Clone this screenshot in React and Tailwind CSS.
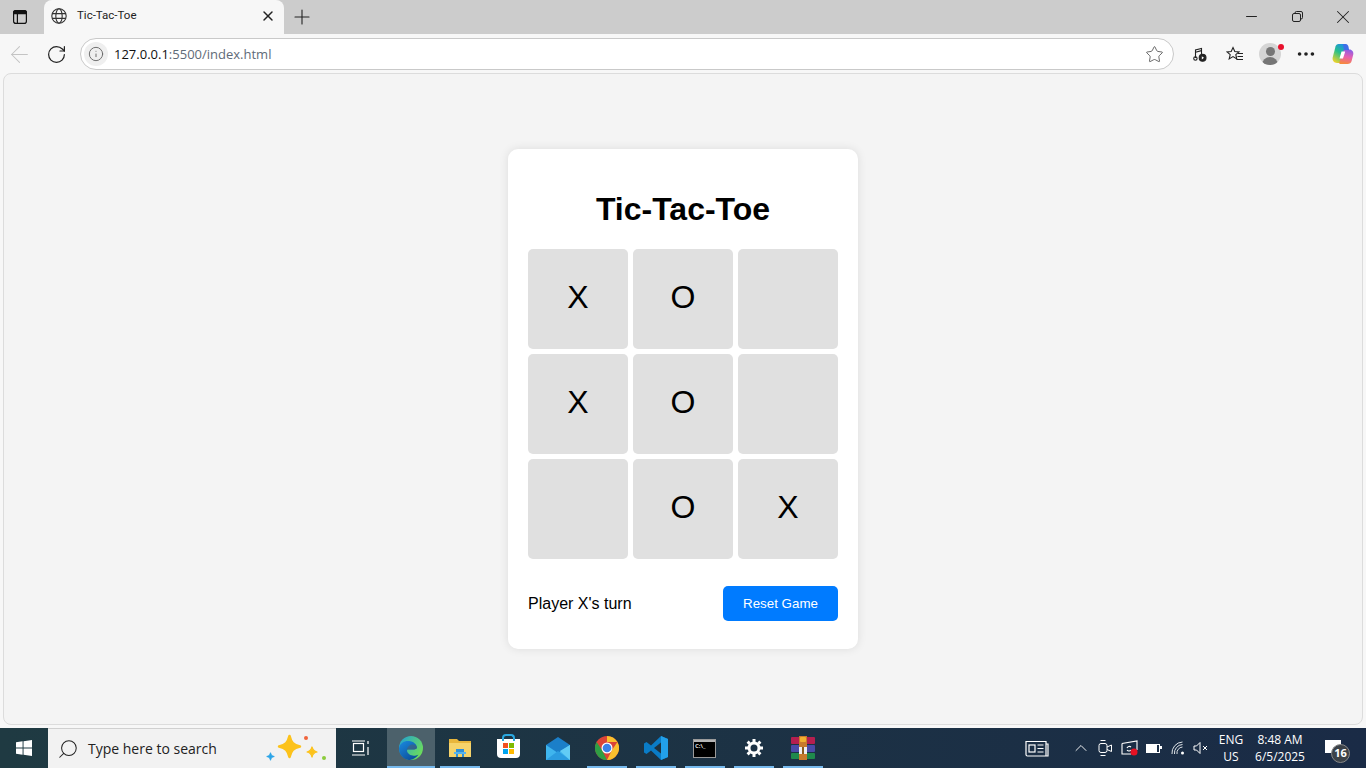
import { ArrowLeft, RotateCw, Star, Info, Plus, X, Minus, Search, MoreHorizontal, ChevronUp } from 'lucide-react'

const board = ['X', 'O', '', 'X', 'O', '', '', 'O', 'X']

function GlobeIcon() {
  return (
    <svg width="16" height="16" viewBox="0 0 16 16" fill="none" stroke="#333" strokeWidth="1.1">
      <circle cx="8" cy="8" r="7.2" />
      <ellipse cx="8" cy="8" rx="3.2" ry="7.2" />
      <path d="M1.2 5.6h13.6M1.2 10.4h13.6" />
    </svg>
  )
}

function CopilotIcon() {
  return (
    <svg width="23" height="22" viewBox="0 0 23 22">
      <defs>
        <linearGradient id="cpa" x1="0.7" y1="0" x2="0.2" y2="1">
          <stop offset="0" stopColor="#1e8fe6" />
          <stop offset="0.45" stopColor="#27c08a" />
          <stop offset="1" stopColor="#f5d327" />
        </linearGradient>
        <linearGradient id="cpb" x1="0.6" y1="0" x2="0.4" y2="1">
          <stop offset="0" stopColor="#8a5ee8" />
          <stop offset="0.5" stopColor="#e85fb0" />
          <stop offset="1" stopColor="#f78a3c" />
        </linearGradient>
      </defs>
      <path d="M7.500 1H14c1 0 1.800.6 2 1.500L11 20H6c-3 0-5-2.500-4.300-5.400L4.500 3.500C4.900 2 6 1 7.500 1z" fill="url(#cpa)" />
      <path d="M13 6.500h5.500c2.500 0 4.300 2.400 3.800 4.800l-1.600 6.500C20.200 20 18.500 21 16.500 21H9.500c-1 0-1.500-.8-1.200-1.600z" fill="url(#cpb)" />
      <path d="M12 1h2.500c1.500 0 2.800 1.200 3 2.800l.6 3.200h-5z" fill="#3f6fe8" />
      <path d="M10.500 8.500h3.700L12 15.500H8.500z" fill="#fff" />
    </svg>
  )
}

function Browser() {
  return (
    <>
      <div className="flex h-[34px] shrink-0 bg-[#cccccc] pb-[1px]">
        <div className="flex w-[44px] items-center justify-center pr-[4px]">
          <svg width="14" height="14" viewBox="0 0 14 14" fill="none" stroke="#111" strokeWidth="1.2">
            <rect x="0.6" y="0.6" width="12.8" height="12.8" rx="2.2" />
            <path d="M4.400 4v9.400" />
            <path d="M0.6 3.600V2.600a2 2 0 0 1 2-2h8.800a2 2 0 0 1 2 2v1z" fill="#111" />
          </svg>
        </div>
        <div className="flex h-[34px] w-[240px] items-center rounded-t-lg bg-[#f7f7f7] pb-[2px] pl-[7px] pr-[8px] font-['Roboto',sans-serif]">
          <GlobeIcon />
          <span className="ml-[10px] flex-1 text-[11.5px] text-[#222]">Tic-Tac-Toe</span>
          <X size={16} strokeWidth={2.2} color="#222" />
        </div>
        <div className="ml-[6px] flex items-center">
          <Plus size={24} strokeWidth={1.1} color="#222" />
        </div>
        <div className="ml-auto flex">
          <div className="flex w-[46px] items-center justify-center"><Minus size={17} strokeWidth={1.5} color="#222" /></div>
          <div className="flex w-[46px] items-center justify-center">
            <svg width="11" height="11" viewBox="0 0 11 11" fill="none" stroke="#222">
              <rect x="0.5" y="2.500" width="8" height="8" rx="1.500" />
              <path d="M3 2.500V2a1.500 1.500 0 0 1 1.500-1.500H9A1.500 1.500 0 0 1 10.500 2v4.500A1.500 1.500 0 0 1 9 8h-.5" />
            </svg>
          </div>
          <div className="flex w-[46px] items-center justify-center"><X size={22} strokeWidth={1.1} color="#222" /></div>
        </div>
      </div>

      <div className="flex h-[39px] shrink-0 items-center bg-[#f7f7f7] pt-[1px]">
        <div className="flex w-[39px] justify-center"><ArrowLeft size={27} strokeWidth={0.9} color="#c4c4c4" /></div>
        <div className="flex w-[34px] justify-center"><RotateCw size={21} strokeWidth={1.4} color="#222" /></div>
        <div className="ml-[7px] flex h-[32px] w-[1094px] items-center rounded-full border border-[#c9c9c9] bg-white pl-[3px] pr-[9px]">
          <div className="flex h-[24px] w-[24px] items-center justify-center rounded-full bg-[#efefef]">
            <Info size={16} strokeWidth={1.4} color="#666" />
          </div>
          <span className="ml-[6px] flex-1 pt-[1px] font-['Open_Sans',sans-serif] text-[13px] text-[#111]">
            127.0.0.1<span className="text-[#5f6b78]">:5500/index.html</span>
          </span>
          <Star size={19} strokeWidth={1} color="#444" />
        </div>
        <div className="ml-[17px] flex w-[18px] justify-center">
          <svg width="14" height="15" viewBox="0 0 14 15" fill="none" stroke="#222" strokeWidth="1.1">
            <path d="M2.500 11V3l6-1.600V7" />
            <path d="M2.500 5.200l6-1.600" />
            <circle cx="2.400" cy="11.600" r="1.700" />
            <circle cx="9.600" cy="10.800" r="3.400" fill="#222" />
            <path d="M8.800 9.200l2.200 1.600-2.200 1.600z" fill="#fff" stroke="none" />
          </svg>
        </div>
        <div className="ml-[17px] flex w-[18px] justify-center">
          <svg width="18" height="17" viewBox="0 0 18 17" fill="none" stroke="#222" strokeWidth="1.1">
            <path d="M7 1.500l1.800 4 4.200.4-3.200 2.800 1 4.200L7 10.600l-3.800 2.300 1-4.200L1 5.900l4.200-.4z" />
            <path d="M12 7.500h5M11.500 10.500h5.500M10.500 13.500h6.500" />
          </svg>
        </div>
        <div className="relative ml-[15px] h-[22px] w-[22px] overflow-hidden rounded-full bg-[#d5d5d5]">
          <div className="mx-auto mt-[4px] h-[9px] w-[9px] rounded-full bg-[#767676]" />
          <div className="mx-auto mt-[1px] h-[10px] w-[16px] rounded-t-full bg-[#767676]" />
        </div>
        <div className="relative -ml-[3px] -mt-[15px] h-[6px] w-[6px] rounded-full bg-[#e8112d]" />
        <div className="ml-[11px] flex w-[22px] justify-center"><MoreHorizontal size={22} strokeWidth={2} color="#222" /></div>
        <div className="ml-[13px] flex w-[24px] justify-center">
          <CopilotIcon />
        </div>
      </div>
    </>
  )
}

function Card() {
  return (
    <div className="flex h-[500px] w-[350px] flex-col rounded-[10px] bg-white px-[20px] pt-[20px] shadow-[0_0_10px_rgba(0,0,0,0.1)]">
      <h1 className="mb-[20.44px] mt-[22.44px] text-center text-[32px] leading-[37px] font-bold text-black">Tic-Tac-Toe</h1>
      <div className="grid grid-cols-[repeat(3,100px)] gap-[5px]">
        {board.map((cell, i) => (
          <div key={i} className="flex h-[100px] w-[100px] items-center justify-center rounded-[5px] bg-[#e0e0e0] pb-[3px] text-[32px] text-black">
            {cell}
          </div>
        ))}
      </div>
      <div className="mt-[27px] flex items-center justify-between">
        <span className="pt-[2px] text-[16px] text-black">Player X's turn</span>
        <button className="h-[35px] w-[115px] rounded-[5px] bg-[#007bff] pt-[1px] text-[13.333px] text-white">Reset Game</button>
      </div>
    </div>
  )
}

function Sparkle({ size, color, className }) {
  return (
    <svg width={size} height={size} viewBox="-2 -2 24 24" className={className}>
      <path d="M10 0c1.500 6 3.500 8.500 10 10-6.500 1.500-8.500 4-10 10-1.500-6-3.500-8.500-10-10 6.500-1.500 8.500-4 10-10z" fill={color} stroke={color} strokeWidth="2.500" strokeLinejoin="round" />
    </svg>
  )
}

function TaskItem({ active, running, children }) {
  return (
    <div className={`relative flex h-[40px] items-center justify-center ${active ? 'w-[48px] bg-[#4c616b]' : 'w-[49px]'}`}>
      {children}
      {running ? <div className={`absolute bottom-0 h-[2px] bg-[#76b9ed] ${active ? 'inset-x-0' : 'left-[5px] w-[40px]'}`} /> : null}
    </div>
  )
}

function Taskbar() {
  return (
    <div className="flex h-[40px] shrink-0 items-stretch bg-gradient-to-r from-[#1f3a42] to-[#1a2b46] font-['Open_Sans',sans-serif] text-white">
      <div className="flex w-[48px] items-center justify-center">
        <svg width="16" height="16" viewBox="0 0 17 17" fill="#fff">
          <path d="M0 2.400l7-1v6.700H0zM8 1.200L17 0v8.100H8zM0 9h7v6.700l-7-1zM8 9h9v8l-9-1.300z" />
        </svg>
      </div>
      <div className="flex w-[288px] items-center border-t border-[#d0d0d0] bg-[#f2f2f2] pl-[9px]">
        <Search size={22} strokeWidth={1.1} color="#222" className="-scale-x-100" />
        <span className="ml-[9px] text-[14px] text-[#222]">Type here to search</span>
        <div className="relative ml-[49px] h-[40px] flex-1">
          <Sparkle size={9} color="#2aa4e8" className="absolute left-0 top-[23px]" />
          <Sparkle size={25} color="#fcc21b" className="absolute left-[11px] top-[5px]" />
          <Sparkle size={12} color="#fcc21b" className="absolute left-[40px] top-[17px]" />
          <div className="absolute left-[38px] top-[7px] h-[4px] w-[4px] rounded-full bg-[#f0643c]" />
          <div className="absolute left-[56px] top-[27px] h-[4px] w-[4px] rounded-full bg-[#8ccc3c]" />
        </div>
      </div>
      <div className="flex w-[51px] items-center justify-center pr-[2px]">
        <svg width="18" height="16" viewBox="0 0 18 16" fill="none" stroke="#fff" strokeWidth="1.2">
          <rect x="1.500" y="3.500" width="10" height="8" />
          <path d="M0 1h13M0 15h13M16 1v3M16 7v8" />
        </svg>
      </div>
      <TaskItem active running>
        <svg width="24" height="24" viewBox="0 0 24 24">
          <defs>
            <linearGradient id="eg" x1="0" y1="0" x2="1" y2="0.600">
              <stop offset="0" stopColor="#1e9fd8" />
              <stop offset="1" stopColor="#6bdc5c" />
            </linearGradient>
            <linearGradient id="eb" x1="0" y1="0" x2="0.700" y2="1">
              <stop offset="0" stopColor="#1a8ae0" />
              <stop offset="1" stopColor="#0c4f9a" />
            </linearGradient>
          </defs>
          <circle cx="12" cy="12" r="12" fill="url(#eg)" />
          <path d="M0 12.500C.5 7 5.500 4.500 10 5c4.500.5 7.500 3 8 6.500 0 1.500-2 2-4.500 2H9c-.8 0-1.200.6-1 1.500.6 3 4.500 5.500 9 4.500 1-.2 2-.7 2.500-1-2 2.800-4.500 5-8.500 5.500C5.500 24.500 0 19 0 12.500z" fill="url(#eb)" />
          <path d="M8 15c-.6-3 2-6 5-6.500 2.500-.3 5 1 5 3 0 1.500-2 2-4.500 2H9c-.5 0-.9.600-1 1.500z" fill="#4c616b" opacity="0.55" />
        </svg>
      </TaskItem>
      <TaskItem running>
        <svg width="22" height="20" viewBox="0 0 22 20">
          <path d="M0 1h8l2 2h12v15H0z" fill="#e8b63c" />
          <path d="M0 5h22v14H0z" fill="#f5d36b" />
          <path d="M7 11h8v8h-2v-5H9v5H7z" fill="#2d8fd8" />
          <path d="M5 14h12v2H5z" fill="#57b4ee" />
        </svg>
      </TaskItem>
      <TaskItem>
        <div className="relative flex h-[19px] w-[23px] flex-wrap content-center justify-center gap-[1px] rounded-b-[4px] bg-white px-[6px] pt-[1px]">
          <div className="absolute -top-[5px] left-[5px] h-[7px] w-[13px] rounded-t-[4px] border-2 border-b-0 border-[#2ba8e0]" />
          <div className="h-[5px] w-[5px] bg-[#f25022]" />
          <div className="h-[5px] w-[5px] bg-[#7fba00]" />
          <div className="h-[5px] w-[5px] bg-[#00a4ef]" />
          <div className="h-[5px] w-[5px] bg-[#ffb900]" />
        </div>
      </TaskItem>
      <TaskItem>
        <svg width="24" height="23" viewBox="0 0 24 23">
          <path d="M0 8L12 0l12 8v15H0z" fill="#1b7fc9" />
          <path d="M0 8l12 8 12-8v15H0z" fill="#3fb5ee" />
          <path d="M0 23l12-9 12 9z" fill="#2b9ce0" />
          <path d="M14 14l10-6v15z" fill="#62ccf5" />
        </svg>
      </TaskItem>
      <TaskItem running>
        <svg width="24" height="24" viewBox="0 0 24 24">
          <circle cx="12" cy="12" r="12" fill="#db4437" />
          <path d="M12 0a12 12 0 0 1 10.400 6H12z" fill="#fbc02d" />
          <path d="M22.400 6A12 12 0 0 1 12 24l5-10z" fill="#fbc02d" />
          <path d="M1.600 6L7 14l5 10A12 12 0 0 1 1.600 6z" fill="#2f9e44" />
          <circle cx="12" cy="12" r="5.500" fill="#fff" />
          <circle cx="12" cy="12" r="4.300" fill="#3b82e8" />
        </svg>
      </TaskItem>
      <TaskItem running>
        <svg width="24" height="24" viewBox="0 0 24 24">
          <path d="M17 0l7 3v18l-7 3-10-9.500-4.500 3.500L0 16.500v-9L2.500 6 7 9.500z" fill="#0a7cc7" />
          <path d="M17 0l7 3v18l-7 3z" fill="#22a0ea" />
          <path d="M17 6.500L10 12l7 5.500z" fill="#1d3240" />
        </svg>
      </TaskItem>
      <TaskItem running>
        <div className="flex h-[19px] w-[23px] flex-col border border-[#9a9a9a] bg-black">
          <div className="h-[2px] bg-[#b5b5b5]" />
          <span className="ml-[1px] text-[6px] leading-[8px] font-bold text-[#ddd]">C:\_</span>
        </div>
      </TaskItem>
      <TaskItem running>
        <svg width="18" height="18" viewBox="0 0 18 18" fill="none" stroke="#fff">
          <circle cx="9" cy="9" r="5" strokeWidth="3" />
          <path d="M9 0v3M9 15v3M0 9h3M15 9h3M2.600 2.600l2.100 2.100M13.300 13.300l2.100 2.100M2.600 15.400l2.100-2.100M13.300 4.700l2.100-2.100" strokeWidth="3" />
        </svg>
      </TaskItem>
      <TaskItem running>
        <svg width="24" height="24" viewBox="0 0 24 24">
          <rect x="0" y="1" width="24" height="7" rx="1" fill="#b51f4f" />
          <rect x="0" y="9" width="24" height="7" rx="1" fill="#4a4aa8" />
          <rect x="0" y="17" width="24" height="6" rx="1" fill="#1f8a4c" />
          <rect x="8" y="0" width="8" height="24" fill="#c87a2c" />
          <rect x="9" y="1" width="6" height="5" rx="1" fill="#f0b030" />
          <rect x="8" y="11" width="8" height="7" fill="#eee" />
          <rect x="11" y="11" width="2" height="7" fill="#8a5a20" />
        </svg>
      </TaskItem>

      <div className="ml-auto flex items-center">
        <div className="flex w-[26px] justify-center">
          <svg width="24" height="17" viewBox="0 0 24 17" fill="none" stroke="#fff" strokeWidth="1.2">
            <path d="M1 1.500h20v14.500H2.500A1.500 1.500 0 0 1 1 14.500zM21 4h2v12h-2" />
            <rect x="4" y="5" width="6" height="7" />
            <path d="M12.500 5h6M12.500 8.500h6M12.500 12h6" />
          </svg>
        </div>
        <div className="ml-[21px] flex w-[20px] justify-center"><ChevronUp size={22} strokeWidth={1.1} color="#fff" /></div>
        <div className="ml-[2px] flex w-[24px] justify-center">
          <svg width="14" height="18" viewBox="0 0 14 18" fill="none" stroke="#fff" strokeWidth="1">
            <rect x="1" y="4.500" width="8" height="9" rx="2" />
            <path d="M9 8l4.500-2v6.500L9 10.500M2.500 1.500h5M2.500 16.500h5" />
          </svg>
        </div>
        <div className="ml-[1px] flex w-[24px] justify-center">
          <svg width="18" height="16" viewBox="0 0 18 16" fill="none" stroke="#fff" strokeWidth="1.1">
            <path d="M1 3.500l15-2.500v9M1 3.500V14h9" />
            <path d="M6 8a2.500 2.500 0 0 1 4-1M10 10a2.500 2.500 0 0 1-4 0" />
            <circle cx="13" cy="12" r="3.500" fill="#e81123" stroke="none" />
          </svg>
        </div>
        <div className="flex w-[22px] justify-center">
          <div className="relative h-[9px] w-[14px] border border-white">
            <div className="h-full w-[10px] bg-white" />
            <div className="absolute -right-[3px] top-[1px] h-[3px] w-[2px] bg-white" />
          </div>
        </div>
        <div className="ml-[1px] flex w-[26px] justify-center">
          <svg width="14" height="14" viewBox="0 0 14 14" fill="none" stroke="#dfe4e8" strokeWidth="1">
            <path d="M1 13a11 11 0 0 1 10.500-12M3.500 13a8.500 8.500 0 0 1 8-9.500M6 13a6 6 0 0 1 5.500-7" />
            <circle cx="11.500" cy="12" r="1.500" fill="#fff" stroke="none" />
          </svg>
        </div>
        <div className="flex w-[18px] justify-center">
          <svg width="15" height="14" viewBox="0 0 15 14" fill="none" stroke="#fff" strokeWidth="1">
            <path d="M1 5h2.500L7 1.500v11L3.500 9H1zM10 5l4 4M14 5l-4 4" />
          </svg>
        </div>
        <div className="ml-[7px] w-[30px] text-center text-[12px] leading-[17px]">
          <div>ENG</div>
          <div>US</div>
        </div>
        <div className="ml-[3px] w-[62px] text-center text-[12px] leading-[17px]">
          <div>8:48 AM</div>
          <div>6/5/2025</div>
        </div>
        <div className="relative ml-[14px] mr-[25px] h-[16px] w-[16px]">
          <div className="h-[13px] w-[16px] bg-white" />
          <div className="absolute -bottom-[7px] left-[6px] flex h-[19px] w-[19px] items-center justify-center rounded-full border border-[#888] bg-[#3c4248] text-[11px] font-bold">16</div>
        </div>
      </div>
    </div>
  )
}

export default function App() {
  return (
    <div className="flex h-screen flex-col overflow-hidden bg-[#f7f7f7] font-['Liberation_Sans',sans-serif]">
      <Browser />
      <div className="flex flex-1 px-[3px] pb-[3px]">
        <div className="flex flex-1 items-center justify-center rounded-lg border border-[#dcdcdc] bg-[#f4f4f4]">
          <Card />
        </div>
      </div>
      <Taskbar />
    </div>
  )
}
